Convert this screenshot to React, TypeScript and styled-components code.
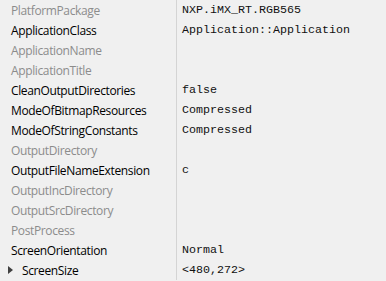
import styled, { createGlobalStyle } from "styled-components";

type Prop = {
  name: string;
  value?: string;
  isSet: boolean;
  expandable?: boolean;
};

const props: Prop[] = [
  { name: "PlatformPackage", value: "NXP.iMX_RT.RGB565", isSet: false },
  { name: "ApplicationClass", value: "Application::Application", isSet: true },
  { name: "ApplicationName", isSet: false },
  { name: "ApplicationTitle", isSet: false },
  { name: "CleanOutputDirectories", value: "false", isSet: true },
  { name: "ModeOfBitmapResources", value: "Compressed", isSet: true },
  { name: "ModeOfStringConstants", value: "Compressed", isSet: true },
  { name: "OutputDirectory", isSet: false },
  { name: "OutputFileNameExtension", value: "c", isSet: true },
  { name: "OutputIncDirectory", isSet: false },
  { name: "OutputSrcDirectory", isSet: false },
  { name: "PostProcess", isSet: false },
  { name: "ScreenOrientation", value: "Normal", isSet: true },
  { name: "ScreenSize", value: "<480,272>", isSet: true, expandable: true },
];

export default function App() {
  return (
    <>
      <GlobalStyle />
      <Grid>
        {props.map(({ name, value, isSet, expandable }) => (
          <Row key={name}>
            <NameCell>
              {expandable && <Arrow />}
              <Name isSet={isSet} indent={expandable}>
                {name}
              </Name>
            </NameCell>
            <ValueCell>{value}</ValueCell>
          </Row>
        ))}
      </Grid>
    </>
  );
}

const GlobalStyle = createGlobalStyle`
  html, body {
    margin: 0;
    background: #f0f0f0;
  }
`;

const Grid = styled.div`
  width: 386px;
  height: 281px;
  background: #f0f0f0;
  overflow: hidden;
`;

const Row = styled.div`
  display: grid;
  grid-template-columns: 177px 1fr;
  height: 20px;
`;

const NameCell = styled.div`
  display: flex;
  align-items: center;
  padding-left: 11px;
  border-right: 1px solid #d4d4d4;
  position: relative;
`;

// expand arrow for the nested ScreenSize property
const Arrow = styled.span`
  position: absolute;
  left: 8px;
  top: 6px;
  width: 0;
  height: 0;
  border-top: 4px solid transparent;
  border-bottom: 4px solid transparent;
  border-left: 5px solid #404040;
`;

const Name = styled.span<{ isSet: boolean; indent?: boolean }>`
  font-family: "Open Sans", "Noto Sans", sans-serif;
  font-size: 12px;
  letter-spacing: -0.37px;
  color: ${(p) => (p.isSet ? "#000000" : "#8c8c8c")};
  padding-left: ${(p) => (p.indent ? "11px" : "0")};
  white-space: nowrap;
`;

const ValueCell = styled.div`
  display: flex;
  align-items: center;
  padding-left: 5px;
  font-family: "Liberation Mono", monospace;
  font-size: 11.67px;
  color: #111;
  white-space: pre;
`;
